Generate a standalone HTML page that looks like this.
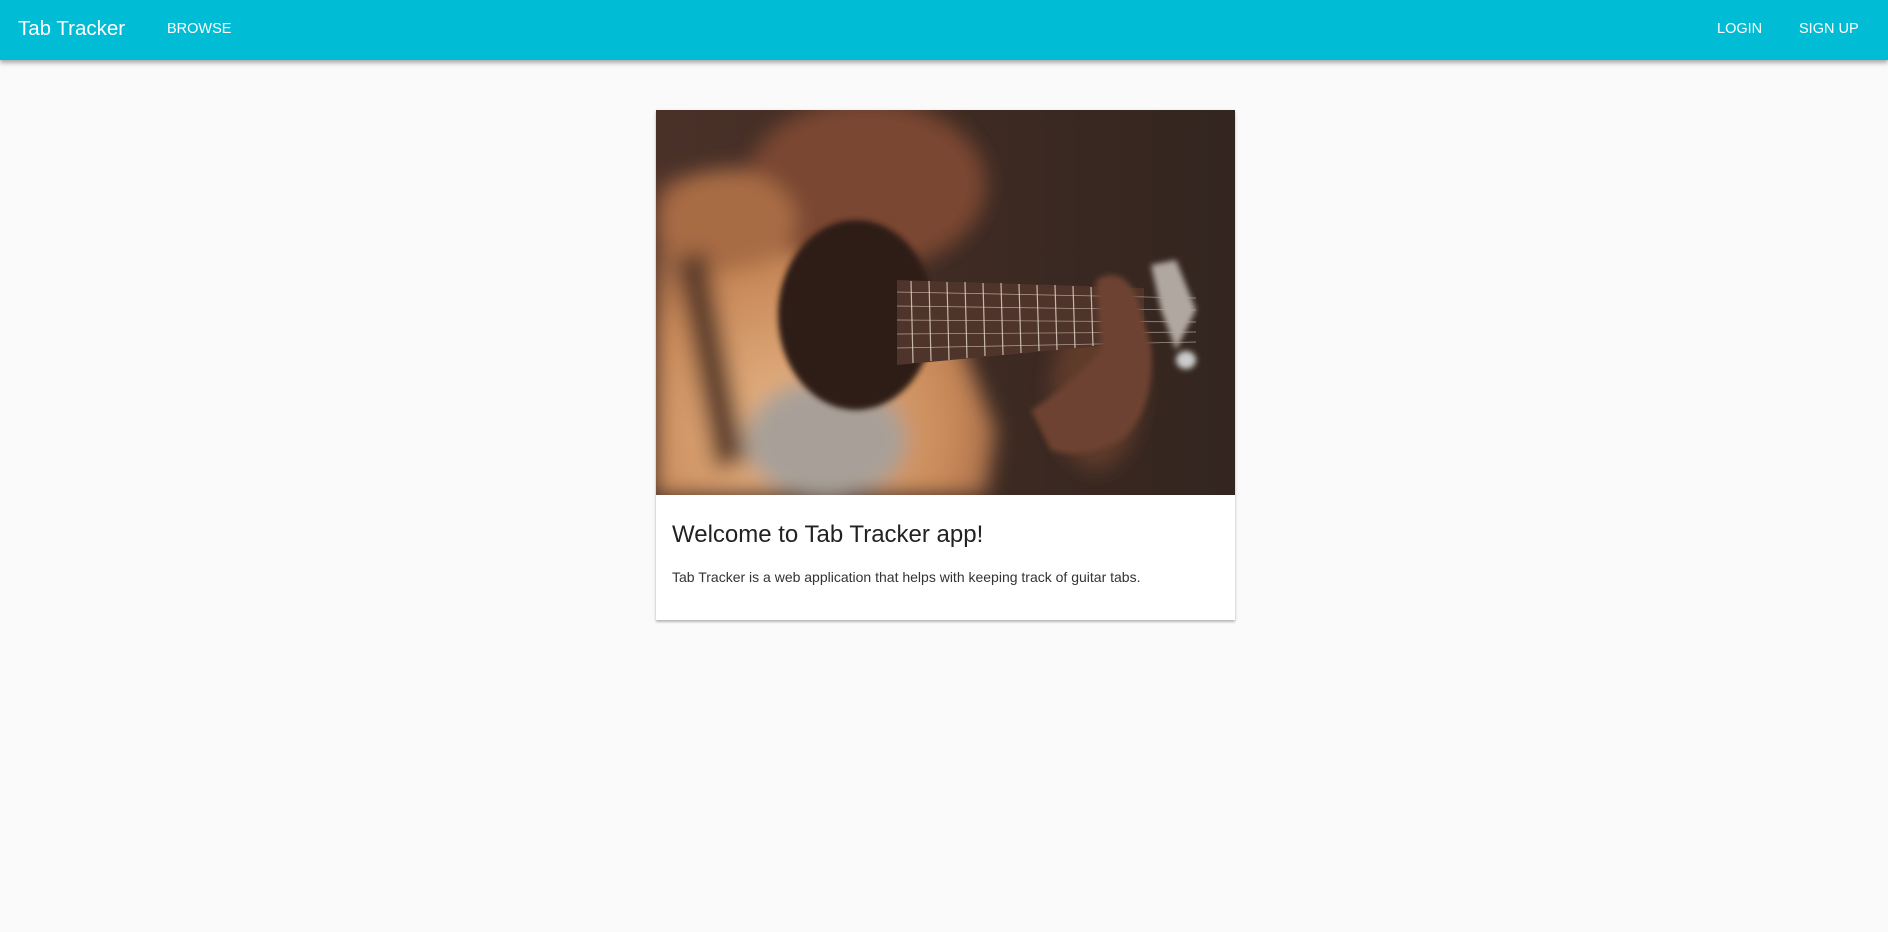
<!DOCTYPE html>
<html><head><meta charset="utf-8"><style>
html,body{margin:0;padding:0;width:1888px;height:932px;background:#fafafa;font-family:"Liberation Sans",Arial,sans-serif;overflow:hidden}
.nav{position:absolute;left:0;top:0;width:1888px;height:60px;background:#00bcd4;box-shadow:0 2px 4px rgba(0,0,0,.25),0 4px 5px rgba(0,0,0,.12)}
.nav span{position:absolute;color:#fff;white-space:nowrap}
.brand{left:18px;top:17px;font-size:20.5px}
.btn{top:21px;font-size:14.5px}
.card{position:absolute;left:656px;top:110px;width:579px;height:510px;background:#fff;box-shadow:0 2px 2px rgba(0,0,0,.2),0 1px 4px rgba(0,0,0,.12)}
.img{position:absolute;left:0;top:0;width:579px;height:385px;overflow:hidden}
.t{position:absolute;left:16px;top:411px;font-size:24px;color:#222;white-space:nowrap}
.b{position:absolute;left:16px;top:459px;font-size:14px;color:#333;white-space:nowrap}
</style></head><body>
<div class="nav">
<span class="brand">Tab Tracker</span>
<span class="btn" style="left:167px">BROWSE</span>
<span class="btn" style="left:1717px">LOGIN</span>
<span class="btn" style="left:1799px">SIGN UP</span>
</div>
<div class="card">
<div class="img">
<svg width="579" height="385" viewBox="0 0 579 385">
<defs>
<filter id="bl" x="-20%" y="-20%" width="140%" height="140%"><feGaussianBlur stdDeviation="10"/></filter>
<filter id="bs"><feGaussianBlur stdDeviation="3"/></filter>
<linearGradient id="bg" x1="0" y1="0" x2="1" y2="0"><stop offset="0" stop-color="#4a3128"/><stop offset="1" stop-color="#33251f"/></linearGradient>
<radialGradient id="body" cx="0.4" cy="0.8" r="0.8"><stop offset="0" stop-color="#e8b888"/><stop offset="0.6" stop-color="#c88858"/><stop offset="1" stop-color="#6a4030"/></radialGradient>
</defs>
<rect width="579" height="385" fill="url(#bg)"/>
<g filter="url(#bl)">
<path d="M0 70 L90 55 L200 120 L300 220 L340 320 L330 385 L0 385 Z" fill="url(#body)"/>
<ellipse cx="210" cy="75" rx="120" ry="85" fill="#7a4630"/>
<ellipse cx="70" cy="110" rx="70" ry="50" fill="#a86c44"/>
<ellipse cx="170" cy="330" rx="80" ry="60" fill="#a8a098"/>
<path d="M20 150 L50 140 L90 350 L60 360 Z" fill="#5a3a2a"/>
<ellipse cx="440" cy="280" rx="45" ry="80" fill="#5e3a2c"/>
</g>
<g filter="url(#bs)">
<ellipse cx="200" cy="205" rx="78" ry="95" fill="#2e1e18"/>
</g>
<path d="M241 170 L488 178 L488 232 L241 255 Z" fill="#4e342a"/>
<g stroke="#c8b8a8" stroke-width="1.2">
<line x1="255" y1="171" x2="257" y2="253"/><line x1="273" y1="171" x2="275" y2="251"/>
<line x1="291" y1="172" x2="293" y2="250"/><line x1="309" y1="172" x2="311" y2="248"/>
<line x1="327" y1="173" x2="329" y2="246"/><line x1="345" y1="173" x2="347" y2="245"/>
<line x1="363" y1="174" x2="365" y2="243"/><line x1="381" y1="175" x2="383" y2="241"/>
<line x1="399" y1="175" x2="401" y2="240"/><line x1="417" y1="176" x2="419" y2="238"/>
<line x1="435" y1="177" x2="437" y2="236"/>
</g>
<g stroke="#e0d0c0" stroke-width="0.7" opacity="0.7">
<line x1="241" y1="182" x2="540" y2="188"/><line x1="241" y1="196" x2="540" y2="200"/>
<line x1="241" y1="210" x2="540" y2="212"/><line x1="241" y1="224" x2="540" y2="222"/>
<line x1="241" y1="238" x2="540" y2="232"/>
</g>
<g filter="url(#bs)">
<path d="M440 170 Q465 155 480 185 L495 235 Q500 300 465 330 Q425 350 395 340 L375 300 Q410 280 445 240 Z" fill="#6e4232"/>
<path d="M495 155 L520 150 L540 200 L520 240 L505 200 Z" fill="#b0a8a0"/>
<ellipse cx="530" cy="250" rx="10" ry="9" fill="#ccc"/>
</g>
</svg>
</div>
<div class="t">Welcome to Tab Tracker app!</div>
<div class="b">Tab Tracker is a web application that helps with keeping track of guitar tabs.</div>
</div>
</body></html>
